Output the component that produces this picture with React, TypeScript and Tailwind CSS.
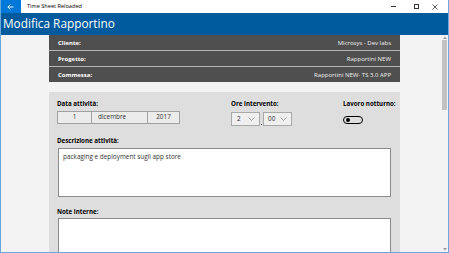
import React from "react";

const font = { fontFamily: '"Open Sans", "Noto Sans", sans-serif' };

function Chevron() {
  return (
    <svg width="7" height="4" viewBox="0 0 7 4" className="block">
      <path d="M0.5 0.5 L3.5 3.5 L6.5 0.5" fill="none" stroke="#8a8a8a" strokeWidth="0.8" />
    </svg>
  );
}

export default function App() {
  return (
    <div
      className="w-[449px] h-[253px] overflow-hidden flex flex-col bg-[#f3f3f3] border-x border-b border-[#6aa7dc] relative"
      style={font}
    >
      {/* title bar */}
      <div className="h-[13px] flex items-stretch bg-white shrink-0 -mx-px">
        <div className="w-[21px] bg-[#0078d7] flex items-center justify-center">
          <svg width="7" height="6" viewBox="0 0 7 6">
            <path d="M6.5 3 H1 M3.2 0.6 L0.8 3 L3.2 5.4" fill="none" stroke="white" strokeWidth="0.9" />
          </svg>
        </div>
        <div className="flex-1 flex items-center pl-[6px] text-[5.6px] text-black leading-none">
          Time Sheet Reloaded
        </div>
        <div className="flex items-center pr-[7px]">
          <div className="w-[23px] flex justify-center">
            <div className="w-[5px] h-px bg-[#333]" />
          </div>
          <div className="w-[23px] flex justify-center">
            <div className="w-[5px] h-[5px] border border-[#333]" />
          </div>
          <div className="w-[14px] flex justify-center">
            <svg width="6" height="6" viewBox="0 0 6 6">
              <path d="M0.5 0.5 L5.5 5.5 M5.5 0.5 L0.5 5.5" stroke="#333" strokeWidth="0.8" />
            </svg>
          </div>
        </div>
      </div>
      {/* header */}
      <div className="h-[22px] bg-[#005a9e] shrink-0 flex items-center pl-[3px] text-white text-[11.8px] leading-none -mx-px">
        Modifica Rapportino
      </div>
      <div className="flex-1 flex min-h-0">
        <div className="flex-1 pl-[48px] pr-[42px] flex flex-col">
          {/* info panel */}
          <div className="w-[351px] bg-[#4f4f4f] text-white text-[6px] leading-none">
            {[
              ["Cliente:", "Microsys - Dev labs"],
              ["Progetto:", "Rapportini NEW"],
              ["Commessa:", "Rapportini NEW- TS 3.0 APP"],
            ].map(([k, v], i) => (
              <div
                key={k}
                className={`h-[15px] flex items-center justify-between pl-[9px] pr-[9px] ${i > 0 ? "border-t border-[#b4b4b4] h-[16px]" : ""}`}
              >
                <span className="font-bold">{k}</span>
                <span className="text-[#f0f0f0]">{v}</span>
              </div>
            ))}
          </div>
          {/* form panel */}
          <div className="mt-[10px] w-[351px] flex-1 bg-[#dedede] pl-[8px] pt-[7px] text-[6.2px] text-black leading-none">
            <div className="flex">
              <div className="w-[174px]">
                <div className="font-bold h-[10px] flex items-center">Data attività:</div>
                <div className="mt-[2px] flex h-[13px] w-[123px] border border-[#a0a0a0] bg-[#ececec] text-[6.4px] text-[#333]">
                  <div className="w-[34px] flex items-center justify-center border-r border-[#a0a0a0]">1</div>
                  <div className="w-[56px] flex items-center pl-[6px] border-r border-[#a0a0a0]">dicembre</div>
                  <div className="flex-1 flex items-center justify-center">2017</div>
                </div>
              </div>
              <div className="w-[112px]">
                <div className="font-bold h-[10px] flex items-center">Ore intervento:</div>
                <div className="mt-[3px] flex items-end text-[6.4px] text-[#333]">
                  <div className="w-[29px] h-[14px] border border-[#a9a9a9] bg-[#efefef] flex items-center justify-between pl-[5px] pr-[4px]">
                    <span>2</span>
                    <Chevron />
                  </div>
                  <div className="w-[3px] flex justify-center pb-[1px]">
                    <div className="w-px h-px bg-[#555]" />
                  </div>
                  <div className="w-[29px] h-[14px] border border-[#a9a9a9] bg-[#efefef] flex items-center justify-between pl-[4px] pr-[4px]">
                    <span>00</span>
                    <Chevron />
                  </div>
                </div>
              </div>
              <div>
                <div className="font-bold h-[10px] flex items-center">Lavoro notturno:</div>
                <div className="mt-[7px] w-[20px] h-[8px] rounded-full border-[1.2px] border-black flex items-center pl-[1.5px]">
                  <div className="w-[4px] h-[4px] rounded-full bg-black" />
                </div>
              </div>
            </div>
            <div className="mt-[10px] font-bold h-[10px] flex items-center">Descrizione attività:</div>
            <div className="mt-[2px] ml-px w-[333px] h-[49px] bg-white border-[1.5px] border-[#8a8a8a] pl-[4px] pt-[5px] text-[6.4px] text-[#333]">
              packaging e deployment sugli app store
            </div>
            <div className="mt-[10px] font-bold h-[10px] flex items-center">Note interne:</div>
            <div className="mt-px ml-px w-[333px] h-[60px] bg-white border-[1.5px] border-[#8a8a8a]" />
          </div>
        </div>
        {/* scrollbar */}
        <div className="w-[6px] flex flex-col items-center bg-[#f3f3f3] mr-px">
          <div className="h-[5px] flex items-center">
            <svg width="4" height="3" viewBox="0 0 4 3">
              <path d="M0 3 L2 0.5 L4 3 Z" fill="#999" />
            </svg>
          </div>
          <div className="w-[5px] h-[70px] bg-[#c2c2c2]" />
          <div className="flex-1" />
          <div className="h-[5px] flex items-center">
            <svg width="4" height="3" viewBox="0 0 4 3">
              <path d="M0 0 L2 2.5 L4 0 Z" fill="#999" />
            </svg>
          </div>
        </div>
      </div>
    </div>
  );
}
